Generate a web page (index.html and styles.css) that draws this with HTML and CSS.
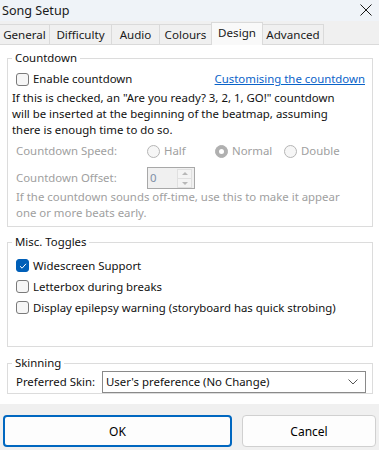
FILE: index.html
```html
<!DOCTYPE html>
<html lang="en">
<head>
  <meta charset="UTF-8">
  <meta name="viewport" content="width=device-width, initial-scale=1.0">
  <title>Song Setup</title>
  <link rel="stylesheet" href="styles.css">
</head>
<body>
  <div class="titlebar">
    <span class="title">Song Setup</span>
    <svg class="close" width="12" height="12" viewBox="0 0 12 12">
      <path d="M0.5 0.5 L11.5 11.5 M11.5 0.5 L0.5 11.5" stroke="#1a1a1a" stroke-width="1" fill="none"/>
    </svg>
  </div>

  <div class="tabs">
    <div class="tab tab-general">General</div>
    <div class="tab tab-difficulty">Difficulty</div>
    <div class="tab tab-audio">Audio</div>
    <div class="tab tab-colours">Colours</div>
    <div class="tab tab-design active">Design</div>
    <div class="tab tab-advanced">Advanced</div>
  </div>

  <div class="page">
    <fieldset class="group countdown">
      <legend>Countdown</legend>
      <div class="row split">
        <label class="check"><span class="box"></span>Enable countdown</label>
        <a class="link" href="#">Customising the countdown</a>
      </div>
      <p class="para">If this is checked, an "Are you ready? 3, 2, 1, GO!" countdown will be inserted at the beginning of the beatmap, assuming there is enough time to do so.</p>
      <div class="row field disabled speed">
        <span class="field-label">Countdown Speed:</span>
        <div class="options">
          <span class="option"><span class="radio"></span>Half</span>
          <span class="option"><span class="radio on"></span>Normal</span>
          <span class="option"><span class="radio"></span>Double</span>
        </div>
      </div>
      <div class="row field disabled offset">
        <span class="field-label">Countdown Offset:</span>
        <div class="spin">
          <span class="spin-value">0</span>
          <span class="spin-buttons">
            <span class="spin-btn up"></span>
            <span class="spin-btn down"></span>
          </span>
        </div>
      </div>
      <p class="hint">If the countdown sounds off-time, use this to make it appear one or more beats early.</p>
    </fieldset>

    <fieldset class="group toggles">
      <legend>Misc. Toggles</legend>
      <label class="check toggle"><span class="box checked">
        <svg width="8" height="8" viewBox="0 0 8 8"><path d="M1 4.2 L3.1 6.2 L7 1.8" stroke="#fff" stroke-width="1" fill="none"/></svg>
      </span>Widescreen Support</label>
      <label class="check toggle"><span class="box"></span>Letterbox during breaks</label>
      <label class="check toggle"><span class="box"></span>Display epilepsy warning (storyboard has quick strobing)</label>
    </fieldset>

    <fieldset class="group skinning">
      <legend>Skinning</legend>
      <div class="row field">
        <span class="skin-label">Preferred Skin:</span>
        <div class="select">
          <span>User's preference (No Change)</span>
          <svg width="10" height="6" viewBox="0 0 10 6"><path d="M0.5 0.5 L5 5 L9.5 0.5" stroke="#555" stroke-width="1" fill="none"/></svg>
        </div>
      </div>
    </fieldset>
  </div>

  <div class="footer">
    <button class="btn primary">OK</button>
    <button class="btn">Cancel</button>
  </div>
</body>
</html>
```

FILE: styles.css
```css
body {
  margin: 0;
  width: 379px;
  height: 450px;
  overflow: hidden;
  font-family: 'Noto Sans', 'Open Sans', sans-serif;
  font-size: 11.4px;
  line-height: 16px;
  color: #111;
  background-color: #f0f0f0;
}

.titlebar {
  height: 21px;
  background-color: #eff3f8;
  display: flex;
  align-items: center;
  justify-content: space-between;
  padding: 0 7px 0 2px;
}

.title {
  font-size: 12.6px;
  color: #1a1a1a;
}

.close {
  margin-top: -2px;
}

.tabs {
  display: flex;
  align-items: flex-end;
  height: 22px;
  background-color: #f0f0f0;
  border-bottom: 1px solid #dadada;
  padding-top: 1px;
}

.tab {
  height: 20px;
  line-height: 20px;
  text-align: center;
  box-sizing: border-box;
  border: 1px solid #dadada;
  border-bottom: none;
  border-left: none;
  color: #1a1a1a;
  font-size: 11.6px;
}

.tab-general { width: 50px; }
.tab-difficulty { width: 62px; }
.tab-audio { width: 48px; }
.tab-colours { width: 52px; }
.tab-design { width: 52px; }
.tab-advanced { width: 61px; }

.tab.active {
  height: 23px;
  line-height: 20px;
  margin-bottom: -1px;
  background-color: #f9f9f9;
  border-left: 1px solid #dadada;
  margin-left: -1px;
}

.page {
  background-color: #fff;
  height: 359px;
  padding: 5px 6px 0 7px;
  box-sizing: border-box;
}

.group {
  margin: 0;
  padding: 0 8px;
  border: 1px solid #dcdcdc;
  min-width: 0;
}

.group legend {
  padding: 0 3px;
  margin-left: -4px;
  line-height: 16px;
}

.row {
  display: flex;
  align-items: center;
  height: 16px;
}

.split {
  justify-content: space-between;
  margin-top: 5px;
}

.check {
  display: flex;
  align-items: center;
}

.box {
  width: 11px;
  height: 11px;
  border: 1px solid #7a7a7a;
  border-radius: 3px;
  background-color: #f6f6f6;
  margin-right: 4px;
  display: flex;
  align-items: center;
  justify-content: center;
}

.box.checked {
  background-color: #005fb8;
  border-color: #005fb8;
}

.link {
  color: #0a63c9;
  text-decoration: underline;
  margin-right: -1px;
}

.para {
  margin: 3px 20px 0 -4px;
  line-height: 16px;
}

.disabled {
  color: #a0a0a0;
}

.field-label {
  width: 131px;
  flex: none;
}

.speed {
  margin-top: 5px;
}

.options {
  display: grid;
  grid-template-columns: 68px 69px auto;
}

.option {
  display: flex;
  align-items: center;
}

.radio {
  width: 11px;
  height: 11px;
  border: 1px solid #b5b5b5;
  border-radius: 50%;
  background-color: #f6f6f6;
  margin-right: 4px;
  position: relative;
}

.radio.on {
  background-color: #b0b0b0;
  border-color: #b0b0b0;
}

.radio.on:after {
  content: '';
  position: absolute;
  left: 3px;
  top: 3px;
  width: 5px;
  height: 5px;
  border-radius: 50%;
  background-color: #fff;
}

.offset {
  height: 22px;
  margin-top: 8px;
}

.spin {
  width: 46px;
  height: 20px;
  border: 1px solid #a8a8a8;
  background-color: #f0f0f0;
  display: flex;
  align-items: center;
  justify-content: space-between;
}

.spin-value {
  padding-left: 2px;
  color: #7f8fa6;
}

.spin-buttons {
  display: flex;
  flex-direction: column;
  margin-right: 2px;
}

.spin-btn {
  width: 13px;
  height: 8px;
  border: 1px solid #e0e0e0;
  background-color: #f4f4f4;
  position: relative;
}

.spin-btn + .spin-btn {
  border-top: none;
}

.spin-btn:after {
  content: '';
  position: absolute;
  left: 4px;
  width: 0;
  height: 0;
  border-left: 3px solid transparent;
  border-right: 3px solid transparent;
}

.spin-btn.up:after {
  top: 2px;
  border-bottom: 3px solid #b8b8b8;
}

.spin-btn.down:after {
  top: 3px;
  border-top: 3px solid #b8b8b8;
}

.hint {
  margin: 0 10px 0 0;
  color: #a0a0a0;
  padding-bottom: 5px;
}

.toggles {
  margin-top: 7px;
  padding-top: 5px;
  padding-bottom: 28px;
}

.toggle {
  height: 21px;
}

.skinning {
  margin-top: 8px;
  padding-right: 6px;
}

.skinning .row {
  height: 22px;
}

.skin-label {
  width: 86px;
  flex: none;
}

.select {
  flex: 1;
  height: 20px;
  border: 1px solid #8a8a8a;
  display: flex;
  align-items: center;
  justify-content: space-between;
  padding: 0 7px 0 3px;
}

.footer {
  display: flex;
  gap: 10px;
  padding: 11px 3px 0 3px;
}

.btn {
  height: 32px;
  font-family: inherit;
  font-size: 12px;
  color: #000;
  background-color: #fdfdfd;
  border: 1px solid #d0d0d0;
  border-radius: 4px;
  flex: 1;
}

.btn.primary {
  width: 229px;
  flex: none;
  border: 2px solid #0067c0;
}
```
